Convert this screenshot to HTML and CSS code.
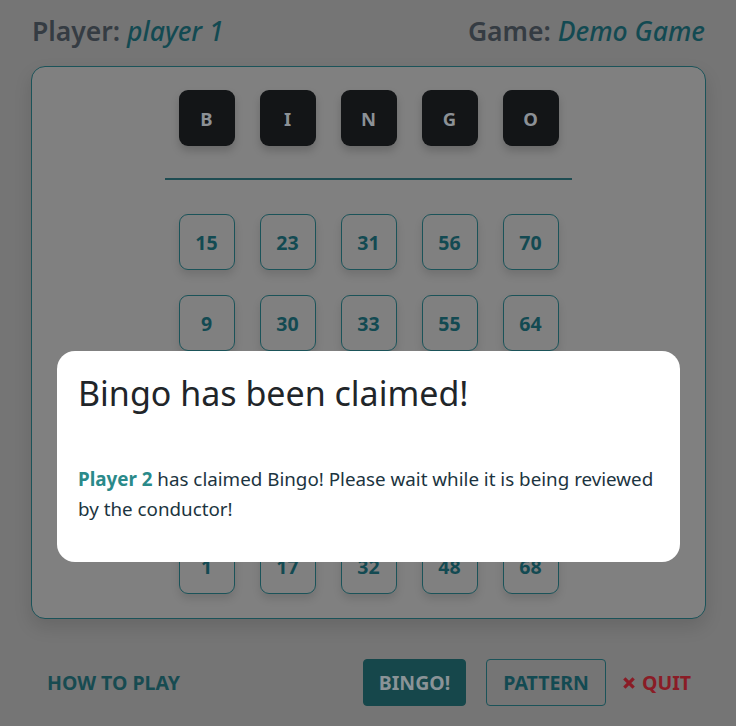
FILE: index.html
```html
<!DOCTYPE html>
<html lang="en">
<head>
<meta charset="utf-8">
<title>Bingo</title>
<link rel="stylesheet" href="styles.css">
</head>
<body>
<div class="page">
  <header class="top">
    <h3 class="info">Player: <em>player 1</em></h3>
    <h3 class="info">Game: <em>Demo Game</em></h3>
  </header>
  <section class="card">
    <div class="letters">
      <div class="tile letter">B</div>
      <div class="tile letter">I</div>
      <div class="tile letter">N</div>
      <div class="tile letter">G</div>
      <div class="tile letter">O</div>
    </div>
    <div class="divider"></div>
    <div class="grid">
      <div class="tile num">15</div><div class="tile num">23</div><div class="tile num">31</div><div class="tile num">56</div><div class="tile num">70</div>
      <div class="tile num">9</div><div class="tile num">30</div><div class="tile num">33</div><div class="tile num">55</div><div class="tile num">64</div>
      <div class="tile num"></div><div class="tile num"></div><div class="tile num"></div><div class="tile num"></div><div class="tile num"></div>
      <div class="tile num"></div><div class="tile num"></div><div class="tile num"></div><div class="tile num"></div><div class="tile num"></div>
      <div class="tile num">1</div><div class="tile num">17</div><div class="tile num">32</div><div class="tile num">48</div><div class="tile num">68</div>
    </div>
  </section>
  <footer class="actions">
    <button class="link">HOW TO PLAY</button>
    <div class="right">
      <button class="btn primary">BINGO!</button>
      <button class="btn outline">PATTERN</button>
      <button class="btn quit"><svg class="x" viewBox="0 0 12 12" width="14" height="14"><path d="M2 2 L10 10 M10 2 L2 10" stroke="currentColor" stroke-width="2.8" stroke-linecap="butt"/></svg>QUIT</button>
    </div>
  </footer>
</div>
<div class="modal">
  <h2 class="modal-title">Bingo has been claimed!</h2>
  <p class="modal-text"><strong class="who">Player 2</strong> has claimed Bingo! Please wait while it is being reviewed by the conductor!</p>
</div>
</body>
</html>
```

FILE: styles.css
```css
* { box-sizing: border-box; }
html, body { margin: 0; padding: 0; }
body {
  background: #757575;
  font-family: "Noto Sans", "Open Sans", sans-serif;
  color: #1f2528;
  width: 736px;
  height: 726px;
  overflow: hidden;
}
.page {
  padding: 0 30px 0 31px;
}
.top {
  display: flex;
  justify-content: space-between;
  align-items: flex-end;
  height: 66px;
  padding: 0 1px 22px 1px;
}
.info {
  margin: 0;
  font-size: 26.5px;
  font-weight: 600;
  color: #353c43;
  line-height: 1;
}
.info em {
  color: #134a52;
  font-style: italic;
  font-weight: 500;
}
.card {
  background: #808080;
  border: 1px solid #1b5359;
  border-radius: 14px;
  padding: 23px 0 24px;
  display: flex;
  flex-direction: column;
  align-items: center;
  box-shadow: 0 8px 18px rgba(0,0,0,0.12);
}
.letters {
  display: flex;
  gap: 25px;
}
.tile {
  width: 56px;
  height: 56px;
  border-radius: 9px;
  display: flex;
  align-items: center;
  justify-content: center;
  font-weight: 700;
}
.letter {
  background: #131517;
  color: #8c9196;
  font-size: 18.5px;
  box-shadow: 0 5px 9px rgba(0,0,0,0.18);
}
.divider {
  width: 407px;
  height: 2px;
  background: #1e4c52;
  margin-top: 32px;
}
.grid {
  margin-top: 34px;
  display: grid;
  grid-template-columns: repeat(5, 56px);
  gap: 25px;
}
.num {
  border: 1px solid #1b5359;
  color: #134a52;
  font-size: 19.5px;
  box-shadow: 0 5px 9px rgba(0,0,0,0.12);
}
.actions {
  display: flex;
  justify-content: space-between;
  align-items: center;
  margin-top: 40px;
}
button {
  font-family: inherit;
  font-weight: 700;
  font-size: 19.5px;
  background: none;
  border: none;
  cursor: pointer;
}
.link {
  color: #174b51;
  padding: 0 16px;
  height: 47px;
}
.right {
  display: flex;
  align-items: center;
  gap: 20px;
  padding-right: 15px;
}
.btn {
  height: 47px;
  border-radius: 4px;
  padding: 0 15px;
  display: flex;
  align-items: center;
}
.primary {
  background: #16474b;
  color: #8a9397;
  border: 1px solid #16474b;
}
.outline {
  border: 1px solid #1b5359;
  color: #134a52;
  padding: 0 16px;
}
.quit {
  color: #8a1c26;
  padding: 0;
  gap: 6px;
  margin-left: -4px;
}
.x { display: block; }
.modal {
  position: fixed;
  left: 57px;
  top: 351px;
  width: 623px;
  height: 211px;
  background: #ffffff;
  border-radius: 18px;
  padding: 22px 21px;
}
.modal-title {
  margin: 0;
  font-size: 34px;
  font-weight: 400;
  color: #212529;
  line-height: 1.2;
}
.modal-text {
  margin: 50px 0 0;
  font-size: 18.8px;
  line-height: 30px;
  color: #1c3440;
}
.who {
  color: #2a8a8a;
  font-weight: 700;
}
```
